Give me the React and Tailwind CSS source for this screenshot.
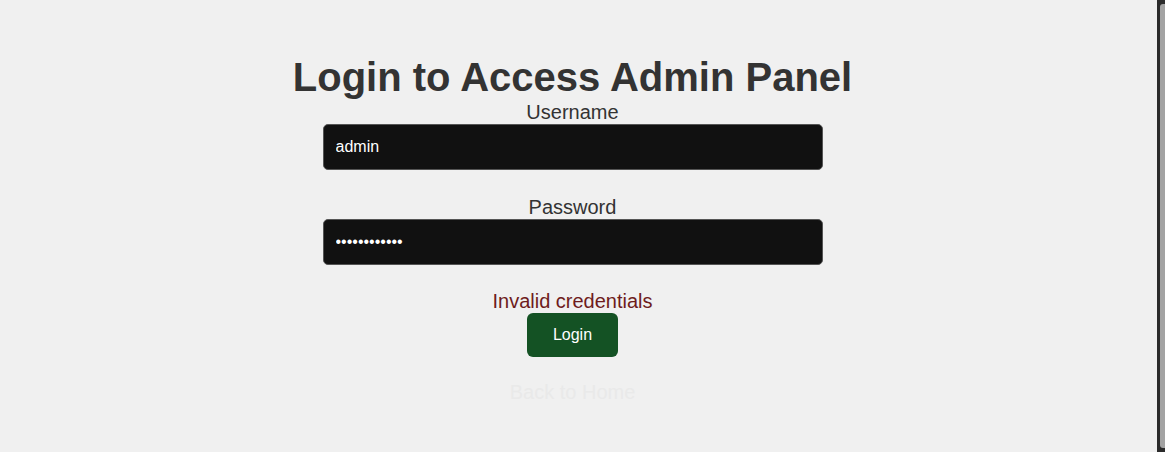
import React from 'react';

const font = { fontFamily: '"Liberation Sans", Arial, sans-serif' };

export default function App() {
  return (
    <div className="flex h-[452px] w-full bg-[#f0f0f0] overflow-hidden" style={font}>
      <div className="flex-1 flex flex-col items-center pr-[12px] pt-[53px] text-[#333333]">
        <h1 className="text-[40px] leading-[48px] font-bold">Login to Access Admin Panel</h1>
        <form className="flex flex-col items-center w-[500px]" onSubmit={(e) => e.preventDefault()}>
          <label className="text-[20px] leading-[23px]">Username</label>
          <input
            type="text"
            defaultValue="admin"
            className="w-[500px] h-[46px] px-3 bg-[#111111] border border-[#555555] rounded-[5px] text-white text-[16px] outline-none"
          />
          <label className="text-[20px] leading-[23px] mt-[26px]">Password</label>
          <input
            type="password"
            defaultValue="adminpass123"
            className="w-[500px] h-[46px] px-3 bg-[#111111] border border-[#555555] rounded-[5px] text-white text-[16px] outline-none"
          />
          <p className="text-[20px] leading-[23px] mt-[25px] text-[#6e1c1c]">Invalid credentials</p>
          <button
            type="submit"
            className="w-[91px] h-[44px] bg-[#145224] rounded-[6px] text-white text-[16px]"
          >
            Login
          </button>
        </form>
        <a href="#" className="mt-[24px] text-[20px] leading-[23px] text-[#e9e9e9]">Back to Home</a>
      </div>
      <div className="w-[8px] h-full bg-[#2b2b2b] flex py-[4px] pl-[3px]">
        <div className="flex-1 bg-[#a3a3a3] rounded-l-[3px]" />
      </div>
    </div>
  );
}
